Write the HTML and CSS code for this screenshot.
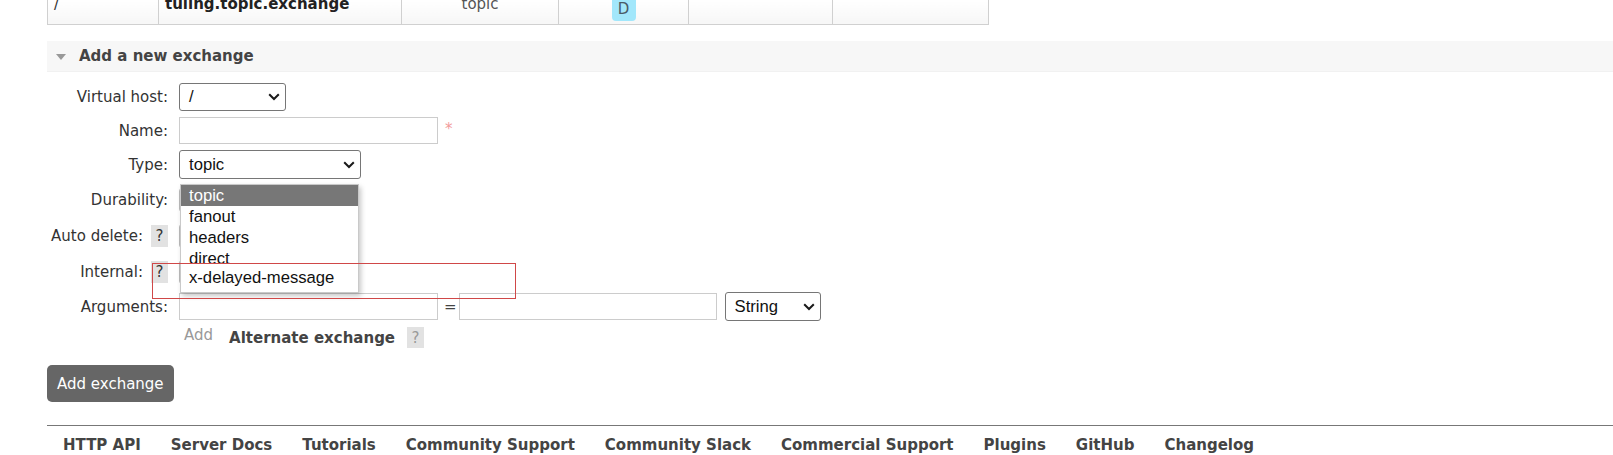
FILE: index.html
```html
<!DOCTYPE html>
<html lang="en">
<head>
<meta charset="utf-8">
<title>Add a new exchange</title>
<link rel="stylesheet" href="styles.css">
</head>
<body>
<div class="page">
  <table class="list">
    <tr>
      <td class="col1">/</td>
      <td class="col2"><b>tuling.topic.exchange</b></td>
      <td class="col3 center">topic</td>
      <td class="col4 center"><span class="badge">D</span></td>
      <td class="col5"></td>
      <td class="col6"></td>
    </tr>
  </table>

  <section class="section">
    <h2 class="section-head"><span class="tri"></span>Add a new exchange</h2>

    <div class="form">
      <div class="lbl">Virtual host:</div>
      <div class="ctl">
        <div class="sel sel-vh"><span>/</span><svg class="chev" width="12" height="8" viewBox="0 0 12 8"><path d="M1.2 1.2 L6 6 L10.8 1.2" fill="none" stroke="#1a1a1a" stroke-width="2"/></svg></div>
      </div>

      <div class="lbl">Name:</div>
      <div class="ctl"><div class="inp inp-name"></div><span class="req">*</span></div>

      <div class="lbl">Type:</div>
      <div class="ctl ctl-type">
        <div class="sel sel-type"><span>topic</span><svg class="chev" width="12" height="8" viewBox="0 0 12 8"><path d="M1.2 1.2 L6 6 L10.8 1.2" fill="none" stroke="#1a1a1a" stroke-width="2"/></svg></div>
        <ul class="dropdown">
          <li class="opt opt-on">topic</li>
          <li class="opt">fanout</li>
          <li class="opt">headers</li>
          <li class="opt">direct</li>
          <li class="opt opt-last">x-delayed-message</li>
        </ul>
      </div>

      <div class="lbl">Durability:</div>
      <div class="ctl"><div class="sel sel-hidden"></div></div>

      <div class="lbl">Auto delete:<span class="help">?</span></div>
      <div class="ctl"><div class="sel sel-hidden"></div></div>

      <div class="lbl">Internal:<span class="help">?</span></div>
      <div class="ctl"><div class="sel sel-hidden"></div></div>

      <div class="lbl">Arguments:</div>
      <div class="ctl">
        <div class="inp inp-arg"></div>
        <span class="eq">=</span>
        <div class="inp inp-val"></div>
        <div class="sel sel-str"><span>String</span><svg class="chev" width="12" height="8" viewBox="0 0 12 8"><path d="M1.2 1.2 L6 6 L10.8 1.2" fill="none" stroke="#1a1a1a" stroke-width="2"/></svg></div>
      </div>

      <div class="lbl"></div>
      <div class="ctl ctl-add">
        <span class="add">Add</span>
        <span class="alt">Alternate exchange</span>
        <span class="help help-light">?</span>
      </div>

      <div class="mark"></div>
    </div>

    <button class="btn">Add exchange</button>
  </section>

  <footer class="footer">
    <a class="flink">HTTP API</a>
    <a class="flink">Server Docs</a>
    <a class="flink">Tutorials</a>
    <a class="flink">Community Support</a>
    <a class="flink">Community Slack</a>
    <a class="flink">Commercial Support</a>
    <a class="flink">Plugins</a>
    <a class="flink">GitHub</a>
    <a class="flink">Changelog</a>
  </footer>
</div>
</body>
</html>
```

FILE: styles.css
```css
* { box-sizing: border-box; }

html, body {
  margin: 0;
  padding: 0;
  background: #fff;
}

body {
  font-family: "DejaVu Sans", Verdana, sans-serif;
  font-size: 15px;
  color: #333;
  overflow: hidden;
}

.page {
  padding-left: 47px;
}

/* ---------- table ---------- */
.list {
  border-collapse: collapse;
  table-layout: fixed;
  width: 941px;
  margin-top: -20px;
}

.list td {
  border: 1px solid #d0d0d0;
  height: 44px;
  padding: 14px 6px 10px;
  line-height: 18px;
  vertical-align: top;
  background: linear-gradient(to bottom, #fff 45%, #f6f6f6);
  white-space: nowrap;
}

.col1 { width: 111px; }
.col2 { width: 243px; }
.col3 { width: 157px; color: #555; }
.col4 { width: 130px; }
.col5 { width: 144px; }
.col6 { width: 156px; }

.center { text-align: center; }

.list b { color: #222; }

.badge {
  position: relative;
  top: 2px;
  display: inline-block;
  vertical-align: top;
  width: 24px;
  height: 24px;
  margin-bottom: -6px;
  line-height: 24px;
  border-radius: 4px;
  background: #a2e7fb;
  color: #4a5a66;
  font-size: 15px;
  text-align: center;
}

/* ---------- section ---------- */
.section-head {
  margin: 16px 0 0;
  height: 31px;
  display: flex;
  align-items: center;
  padding-left: 9px;
  background: #f7f7f7;
  border-bottom: 1px solid #f1f1f1;
  font-size: 15px;
  font-weight: bold;
  color: #444;
}

.tri {
  width: 0;
  height: 0;
  border-left: 5px solid transparent;
  border-right: 5px solid transparent;
  border-top: 6px solid #999;
  margin-right: 13px;
  margin-top: 1px;
}

.form {
  position: relative;
  margin-top: 11px;
  display: grid;
  grid-template-columns: 121px auto;
  grid-template-rows: 28px 27px 29px 30px 30px 29px 29px 21px;
  column-gap: 11px;
  row-gap: 6px;
  align-items: center;
}

.lbl {
  display: flex;
  justify-content: flex-end;
  align-items: center;
  white-space: nowrap;
  color: #333;
}

.ctl {
  display: flex;
  align-items: center;
  height: 100%;
}

.help {
  display: inline-flex;
  align-items: center;
  justify-content: center;
  width: 17px;
  height: 22px;
  margin-left: 8px;
  background: #e2e2e2;
  color: #333;
  font-size: 15px;
}

.help-light {
  color: #999;
  margin-left: 12px;
  height: 21px;
}

/* controls */
.sel {
  display: flex;
  align-items: center;
  justify-content: space-between;
  border: 1px solid #767676;
  border-radius: 3px;
  background: #fff;
  font-family: "Liberation Sans", Arial, sans-serif;
  font-size: 16.67px;
  color: #111;
  padding: 0 5px 0 9px;
}

.sel-vh { width: 107px; height: 28px; }
.sel-type { width: 182px; height: 29px; }
.sel-hidden { width: 120px; height: 24px; border-color: #bbb; }
.sel-str { width: 96px; height: 29px; margin-left: 8px; }

.chev { display: block; }

.inp {
  height: 27px;
  border: 1px solid #ccc;
  background: #fff;
}

.inp-name { width: 259px; }
.inp-arg { width: 259px; }
.inp-val { width: 258px; }

.req {
  margin-left: 7px;
  margin-top: -4px;
  color: #f29a9a;
  font-size: 15px;
}

.eq {
  margin: 0 2px 0 6px;
  color: #444;
  font-size: 15px;
}

.ctl-type { position: relative; }

.dropdown {
  position: absolute;
  left: 1px;
  top: 34px;
  width: 179px;
  margin: 0;
  padding: 0;
  list-style: none;
  border: 1px solid #c9c9c9;
  background: #fff;
  box-shadow: 2px 3px 5px rgba(0, 0, 0, 0.22);
  font-family: "Liberation Sans", Arial, sans-serif;
  font-size: 16.67px;
  color: #111;
  z-index: 2;
}

.opt {
  height: 21px;
  line-height: 21px;
  padding-left: 8px;
}

.opt-on {
  background: #777;
  color: #fff;
}

.opt-last {
  position: relative;
  margin-top: -6px;
  height: 29px;
  line-height: 29px;
  background: #fff;
}

.ctl-add { align-items: flex-start; }

.add {
  margin-left: 5px;
  color: #999;
  font-size: 15px;
  line-height: 18px;
  margin-top: -1px;
}

.alt {
  margin-left: 16px;
  font-weight: bold;
  color: #444;
  line-height: 18px;
  margin-top: 2px;
}

.mark {
  position: absolute;
  left: 105px;
  top: 180px;
  width: 364px;
  height: 36px;
  border: 1px solid #d04848;
  z-index: 3;
  pointer-events: none;
}

.btn {
  display: block;
  margin-top: 17px;
  height: 37px;
  padding: 0 10px;
  border: none;
  border-radius: 5px;
  background: #666;
  color: #fff;
  font-family: "DejaVu Sans", Verdana, sans-serif;
  font-size: 15px;
}

/* ---------- footer ---------- */
.footer {
  margin-top: 23px;
  border-top: 1px solid #777;
  padding: 10px 0 0 1px;
  display: flex;
}

.flink {
  padding: 0 15px;
  font-weight: bold;
  color: #444;
  line-height: 18px;
  white-space: nowrap;
}
```
